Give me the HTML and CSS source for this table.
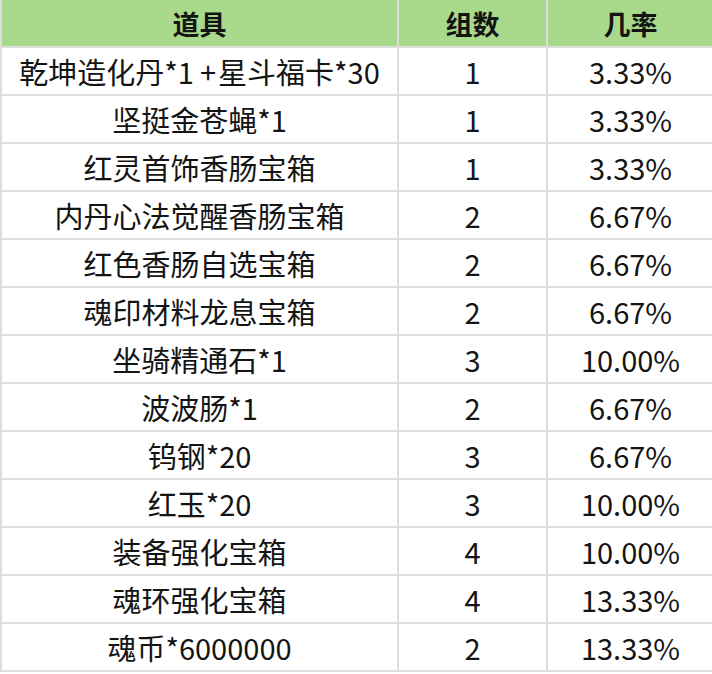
FILE: index.html
```html
<!DOCTYPE html>
<html lang="zh">
<head>
<meta charset="utf-8">
<link rel="stylesheet" href="styles.css">
</head>
<body>
<table class="prob">
  <colgroup><col class="c1"><col class="c2"><col class="c3"></colgroup>
  <thead>
    <tr><th>道具</th><th>组数</th><th>几率</th></tr>
  </thead>
  <tbody>
    <tr><td>乾坤造化丹*1<span class="plus">+</span>星斗福卡*30</td><td>1</td><td>3.33%</td></tr>
    <tr><td>坚挺金苍蝇*1</td><td>1</td><td>3.33%</td></tr>
    <tr><td>红灵首饰香肠宝箱</td><td>1</td><td>3.33%</td></tr>
    <tr><td>内丹心法觉醒香肠宝箱</td><td>2</td><td>6.67%</td></tr>
    <tr><td>红色香肠自选宝箱</td><td>2</td><td>6.67%</td></tr>
    <tr><td>魂印材料龙息宝箱</td><td>2</td><td>6.67%</td></tr>
    <tr><td>坐骑精通石*1</td><td>3</td><td>10.00%</td></tr>
    <tr><td>波波肠*1</td><td>2</td><td>6.67%</td></tr>
    <tr><td>钨钢*20</td><td>3</td><td>6.67%</td></tr>
    <tr><td>红玉*20</td><td>3</td><td>10.00%</td></tr>
    <tr><td>装备强化宝箱</td><td>4</td><td>10.00%</td></tr>
    <tr><td>魂环强化宝箱</td><td>4</td><td>13.33%</td></tr>
    <tr><td>魂币*6000000</td><td>2</td><td>13.33%</td></tr>
  </tbody>
</table>
</body>
</html>
```
FILE: styles.css
```css
html, body {
  margin: 0;
  padding: 0;
  background: #ffffff;
}
.prob {
  width: 713px;
  border-collapse: collapse;
  table-layout: fixed;
  font-family: "Noto Sans CJK SC", "Noto Sans", sans-serif;
  color: #141414;
}
.c1 { width: 397px; }
.c2 { width: 149px; }
.c3 { width: 167px; }
.prob th,
.prob td {
  border: 2px solid #dedede;
  height: 46px;
  padding: 0;
  text-align: center;
  vertical-align: middle;
  line-height: 1;
  white-space: nowrap;
}
.prob thead th {
  border-top: none;
  background: #a9d98b;
  font-size: 27px;
  font-weight: 700;
}
.prob td {
  font-size: 29px;
  font-weight: 400;
}
.plus {
  margin: 0 2px 0 6px;
}
```
